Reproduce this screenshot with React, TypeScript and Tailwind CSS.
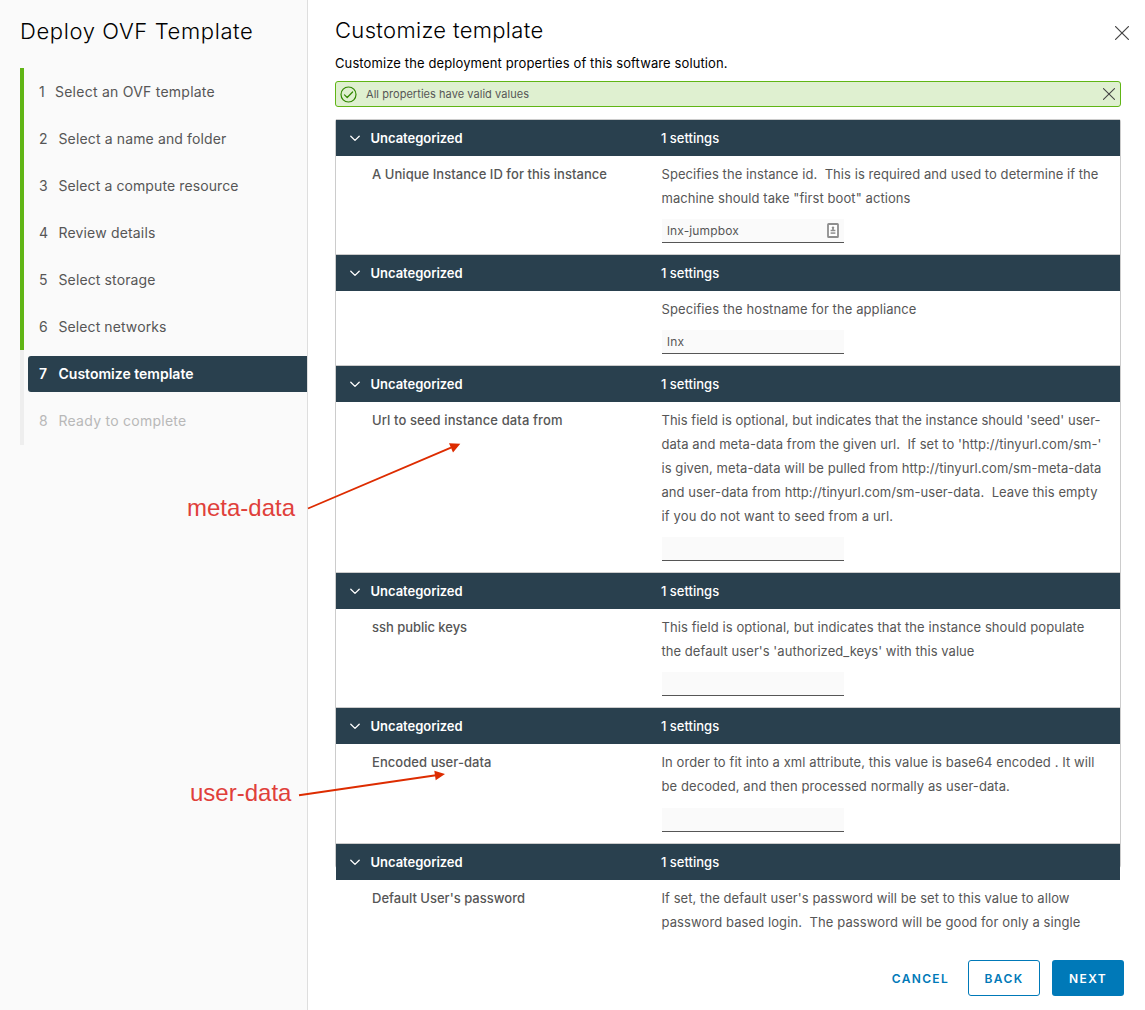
import React from 'react';

type Line = { text: string; tracking: string };

type Section = {
  label?: string;
  labelTracking?: string;
  lines: Line[];
  field?: string;
  fieldTracking?: string;
  fieldIcon?: boolean;
  fieldGap?: string;
};

const steps = [
  { n: '1', label: 'Select an OVF template', tracking: 'tracking-[0.24px]' },
  { n: '2', label: 'Select a name and folder', tracking: 'tracking-[0.137px]' },
  { n: '3', label: 'Select a compute resource', tracking: 'tracking-[0.1px]' },
  { n: '4', label: 'Review details', tracking: 'tracking-[0.166px]' },
  { n: '5', label: 'Select storage', tracking: 'tracking-[0.12px]' },
  { n: '6', label: 'Select networks', tracking: 'tracking-[0.094px]' },
  { n: '7', label: 'Customize template', tracking: 'tracking-[0.007px]' },
  { n: '8', label: 'Ready to complete', tracking: 'tracking-[0.26px]' },
];

const sections: Section[] = [
  {
    label: 'A Unique Instance ID for this instance',
    labelTracking: 'tracking-[0.046px]',
    lines: [
      { text: 'Specifies the instance id.\u00a0 This is required and used to determine if the', tracking: 'tracking-[0.059px]' },
      { text: 'machine should take "first boot" actions', tracking: 'tracking-[0.075px]' },
    ],
    field: 'lnx-jumpbox',
    fieldTracking: 'tracking-[0.13px]',
    fieldIcon: true,
  },
  {
    lines: [{ text: 'Specifies the hostname for the appliance', tracking: 'tracking-[0.091px]' }],
    field: 'lnx',
    fieldTracking: 'tracking-[0.3px]',
  },
  {
    label: 'Url to seed instance data from',
    labelTracking: 'tracking-[0.11px]',
    lines: [
      { text: "This field is optional, but indicates that the instance should 'seed' user-", tracking: 'tracking-[0.021px]' },
      { text: "data and meta-data from the given url.\u00a0 If set to 'http://tinyurl.com/sm-'", tracking: 'tracking-[0.056px]' },
      { text: 'is given, meta-data will be pulled from http://tinyurl.com/sm-meta-data', tracking: 'tracking-[0.059px]' },
      { text: 'and user-data from http://tinyurl.com/sm-user-data.\u00a0 Leave this empty', tracking: 'tracking-[0.065px]' },
      { text: 'if you do not want to seed from a url.', tracking: 'tracking-[0.14px]' },
    ],
  },
  {
    label: 'ssh public keys',
    labelTracking: 'tracking-[-0.03px]',
    lines: [
      { text: 'This field is optional, but indicates that the instance should populate', tracking: 'tracking-[0.083px]' },
      { text: "the default user's 'authorized_keys' with this value", tracking: 'tracking-[0.046px]' },
    ],
  },
  {
    label: 'Encoded user-data',
    labelTracking: 'tracking-[0.06px]',
    lines: [
      { text: 'In order to fit into a xml attribute, this value is base64 encoded . It will', tracking: 'tracking-[0.085px]' },
      { text: 'be decoded, and then processed normally as user-data.', tracking: 'tracking-[0.08px]' },
    ],
    fieldGap: 'mt-[10px]',
  },
  {
    label: "Default User's password",
    labelTracking: 'tracking-[0.006px]',
    lines: [
      { text: "If set, the default user's password will be set to this value to allow", tracking: 'tracking-[0.07px]' },
      { text: 'password based login.\u00a0 The password will be good for only a single', tracking: 'tracking-[0.096px]' },
    ],
  },
];

function CloseIcon({ size }: { size: number }) {
  return (
    <svg width={size} height={size} viewBox="0 0 14 14" fill="none" stroke="#454545" strokeWidth="1.25" strokeLinecap="round">
      <path d="M0.6 0.6 13.4 13.4M13.4 0.6 0.6 13.4" />
    </svg>
  );
}

function Sidebar() {
  return (
    <aside className="flex w-[308px] shrink-0 flex-col border-r border-[#dedede] bg-[#fafafa] pl-5">
      <h1 className="mt-[15px] h-8 text-[22px] leading-8 font-light tracking-[0.62px] whitespace-nowrap text-black">Deploy OVF Template</h1>
      <ol className="mt-[21px] flex flex-col">
        {steps.map((s, i) => {
          const active = i === 6;
          const pending = i === 7;
          return (
            <li
              key={s.n}
              className={`flex items-center border-l-4 pl-1 ${i < 6 ? 'border-[#60b515]' : 'border-[#eeeeee]'} ${pending ? 'h-12' : 'h-[47px]'}`}
            >
              <div
                className={`flex h-9 flex-1 items-center rounded-l-[3px] pl-[11px] text-sm whitespace-nowrap ${
                  active ? 'mt-px bg-[#29404e] font-semibold text-white' : pending ? 'text-[#b8b8b8]' : 'mt-px text-[#565656]'
                }`}
              >
                <span className={i === 0 ? 'w-[16px]' : 'w-[19.5px]'}>{s.n}</span>
                <span className={s.tracking}>{s.label}</span>
              </div>
            </li>
          );
        })}
      </ol>
    </aside>
  );
}

function ContactIcon() {
  return (
    <svg width="12" height="15" viewBox="0 0 12 15" fill="none">
      <rect x="1" y="1" width="10" height="13" rx="0.6" fill="#fff" stroke="#8e8e8e" strokeWidth="1.8" />
      <circle cx="6" cy="4.6" r="1.2" fill="#8e8e8e" />
      <path d="M5.2 5H6.8V6.8H8.4V8.2H3.6V6.8H5.2Z" fill="#8e8e8e" />
      <path d="M3.6 9.2H8.4V11H3.6Z" fill="#a2a2a2" />
    </svg>
  );
}

function SettingsSection({ section, last }: { section: Section; last: boolean }) {
  return (
    <section className="border-t border-[#cccccc]">
      <header className="flex h-9 items-center bg-[#29404e] text-[13px] text-white">
        <svg className="mt-px ml-[14px] shrink-0" width="10" height="7" viewBox="0 0 10 7" fill="none" stroke="#fff" strokeWidth="1.3" strokeLinecap="round" strokeLinejoin="round">
          <path d="M0.8 1.2 5 5.4 9.2 1.2" />
        </svg>
        <span className="mt-0.5 ml-[10.5px] w-[290.5px] font-semibold tracking-[-0.03px]">Uncategorized</span>
        <span className="mt-0.5 font-medium">1 settings</span>
      </header>
      <div className="flex pt-1.5 pb-[11px] pl-9 text-[13px] leading-6 whitespace-nowrap text-[#565656]">
        <div className={`w-[289.5px] shrink-0 font-medium ${section.labelTracking ?? ''}`}>{section.label}</div>
        <div>
          {section.lines.map((l) => (
            <p key={l.text} className={l.tracking}>{l.text}</p>
          ))}
          {!last && (
            <div className={`ml-[0.5px] flex h-6 w-[182px] items-center justify-between border-b border-[#565656] bg-[#fafafa] px-[5px] text-xs ${section.fieldGap ?? 'mt-[9px]'}`}>
              <span className={section.fieldTracking ?? ''}>{section.field}</span>
              {section.fieldIcon && <ContactIcon />}
            </div>
          )}
        </div>
      </div>
    </section>
  );
}

function Annotations() {
  return (
    <div className="pointer-events-none absolute inset-0 font-['Liberation_Sans',sans-serif] text-2xl leading-7 text-[#e0403a]">
      <span className="absolute top-[494px] left-[187px]">meta-data</span>
      <span className="absolute top-[779px] left-[190px]">user-data</span>
      <svg className="absolute inset-0" width="1145" height="1010" viewBox="0 0 1145 1010" fill="#dd2c00" stroke="#dd2c00">
        <path d="M308 508.5 451 447.6M299 795.2 436 775.3" strokeWidth="1.9" fill="none" />
        <path d="M460.3 443.8 449 443.3 453 452.4ZM445 774 434.3 770.8 435.7 780.3Z" stroke="none" />
      </svg>
    </div>
  );
}

export default function App() {
  return (
    <div className="relative flex h-[1010px] w-[1145px] overflow-hidden bg-white font-['Inter',sans-serif] text-[#565656]">
      <Sidebar />
      <main className="flex min-w-0 flex-1 flex-col pl-[27px]">
        <div className="flex items-start justify-between pr-4">
          <h2 className="mt-[14px] h-[33px] text-[22px] leading-8 font-light tracking-[0.33px] text-black">Customize template</h2>
          <button className="mt-[26px]"><CloseIcon size={14} /></button>
        </div>
        <p className="mt-1.5 h-[21px] text-[13px] leading-5 tracking-[0.11px] text-black">Customize the deployment properties of this software solution.</p>
        <div className="mt-[7px] flex h-[26px] w-[786px] items-center rounded-[3px] border border-[#60b515] bg-[#dff0d0] pr-[5px] pl-1 text-[11px]">
          <svg width="17" height="17" viewBox="0 0 17 17" fill="none" stroke="#318700" strokeWidth="1.2" strokeLinecap="round" strokeLinejoin="round">
            <circle cx="8.5" cy="8.5" r="7.5" />
            <path d="M4.5 8.9 7.2 11.5 12.6 6" />
          </svg>
          <span className="ml-[9px] flex-1 tracking-[0.047px]">All properties have valid values</span>
          <CloseIcon size={12} />
        </div>
        <div className="mt-3 h-[817px] w-[786px] shrink-0 overflow-hidden">
          <div className="h-[749px] rounded-[3px] border-x border-[#cccccc]">
            {sections.map((s, i) => (
              <SettingsSection key={i} section={s} last={i === sections.length - 1} />
            ))}
          </div>
        </div>
        <footer className="mt-6 flex items-center justify-end pr-[21px] text-xs font-semibold text-[#0079b8]">
          <button className="mt-0.5 mr-[19px] tracking-[1.32px]">CANCEL</button>
          <button className="mr-3 h-9 w-[72px] rounded-[3px] border border-[#0079b8] pt-0.5 tracking-[1.38px]">BACK</button>
          <button className="h-9 w-[72px] rounded-[3px] bg-[#0079b8] pt-0.5 tracking-[1.38px] text-white">NEXT</button>
        </footer>
      </main>
      <Annotations />
    </div>
  );
}
